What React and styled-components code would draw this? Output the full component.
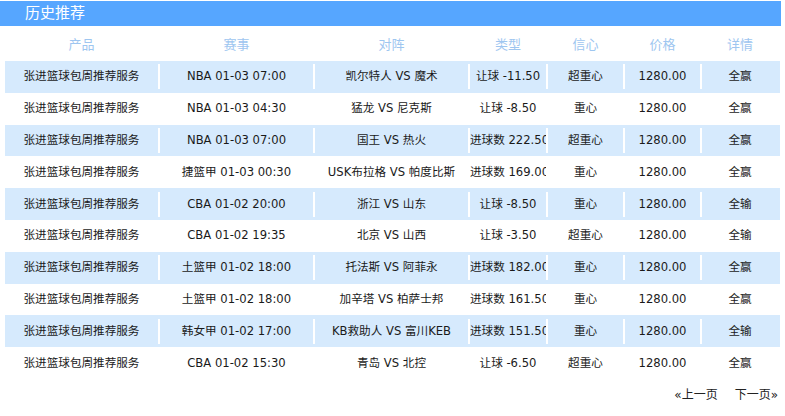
import React from "react"
import styled, { createGlobalStyle } from "styled-components"

const GlobalStyle = createGlobalStyle`
	body {
		margin: 0;
		background: #ffffff;
		font-family: "DejaVu Sans", "Noto Sans CJK SC", sans-serif;
	}
`

const Page = styled.div`
	width: 781px;
	padding-top: 1px;
`

const TitleBar = styled.div`
	height: 25px;
	background-color: #56a6ff;
	color: #ffffff;
	font-size: 15px;
	line-height: 25px;
	padding-left: 25px;
`

const Table = styled.div`
	margin: 0 1px 0 5px;
	width: 775px;
`

const Row = styled.div`
	display: grid;
	grid-template-columns: 155px 155px 155px 78px 77px 77px 78px;
	height: ${(p) => (p.$head ? "35px" : "31.8px")};
	align-items: center;
	background-color: ${(p) => (p.$striped ? "#d6eafd" : "#ffffff")};
`

const Cell = styled.div`
	height: 25px;
	line-height: 25px;
	text-align: center;
	white-space: nowrap;
	overflow: hidden;
	color: ${(p) => (p.$head ? "#9ec6f0" : "#1a1a1a")};
	font-size: ${(p) => (p.$head ? "13px" : "11.6px")};
	border-right: 2px solid ${(p) => (p.$last || p.$head ? "transparent" : "#ffffff")};
	padding-top: ${(p) => (p.$head ? "2px" : "0")};
`

const Pager = styled.div`
	display: flex;
	justify-content: flex-end;
	gap: 17px;
	padding: 6px 3px 0 0;
	font-size: 12px;
	color: #222222;
`

const PageLink = styled.span`
	cursor: pointer;
`

const headings = ["产品", "赛事", "对阵", "类型", "信心", "价格", "详情"]

const rows = [
	["NBA 01-03 07:00", "凯尔特人 VS 魔术", "让球 -11.50", "超重心", "全赢"],
	["NBA 01-03 04:30", "猛龙 VS 尼克斯", "让球 -8.50", "重心", "全赢"],
	["NBA 01-03 07:00", "国王 VS 热火", "进球数 222.50", "超重心", "全赢"],
	["捷篮甲 01-03 00:30", "USK布拉格 VS 帕度比斯", "进球数 169.00", "重心", "全赢"],
	["CBA 01-02 20:00", "浙江 VS 山东", "让球 -8.50", "重心", "全输"],
	["CBA 01-02 19:35", "北京 VS 山西", "让球 -3.50", "超重心", "全输"],
	["土篮甲 01-02 18:00", "托法斯 VS 阿菲永", "进球数 182.00", "重心", "全赢"],
	["土篮甲 01-02 18:00", "加辛塔 VS 柏萨士邦", "进球数 161.50", "重心", "全赢"],
	["韩女甲 01-02 17:00", "KB救助人 VS 富川KEB", "进球数 151.50", "重心", "全输"],
	["CBA 01-02 15:30", "青岛 VS 北控", "让球 -6.50", "超重心", "全赢"],
]

const App = () => (
	<Page>
		<GlobalStyle />
		<TitleBar>历史推荐</TitleBar>
		<Table>
			<Row $head>
				{headings.map((h) => (
					<Cell key={h} $head>
						{h}
					</Cell>
				))}
			</Row>
			{rows.map((r, i) => (
				<Row key={i} $striped={i % 2 === 0}>
					<Cell>张进篮球包周推荐服务</Cell>
					<Cell>{r[0]}</Cell>
					<Cell>{r[1]}</Cell>
					<Cell>{r[2]}</Cell>
					<Cell>{r[3]}</Cell>
					<Cell>1280.00</Cell>
					<Cell $last>{r[4]}</Cell>
				</Row>
			))}
		</Table>
		<Pager>
			<PageLink>«上一页</PageLink>
			<PageLink>下一页»</PageLink>
		</Pager>
	</Page>
)

export default App
